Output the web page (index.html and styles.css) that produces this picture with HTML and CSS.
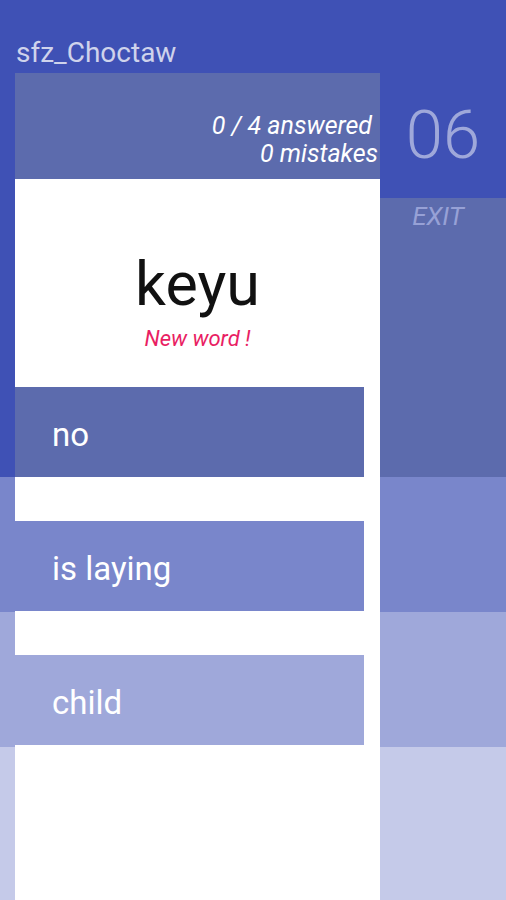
FILE: index.html
```html
<!DOCTYPE html>
<html lang="en">
<head>
<meta charset="utf-8">
<title>sfz_Choctaw</title>
<link rel="stylesheet" href="styles.css">
</head>
<body>
<div class="app">
  <div class="title">sfz_Choctaw</div>
  <div class="main">
    <div class="card">
      <div class="card-head">
        <div class="stat stat-answered">0 / 4 answered</div>
        <div class="stat">0 mistakes</div>
      </div>
      <div class="card-body">
        <div class="word">keyu</div>
        <div class="hint">New word !</div>
        <div class="answers">
          <div class="answer answer-1">no</div>
          <div class="answer answer-2">is laying</div>
          <div class="answer answer-3">child</div>
        </div>
      </div>
    </div>
    <div class="side">
      <div class="counter">06</div>
      <div class="exit">EXIT</div>
    </div>
  </div>
</div>
</body>
</html>
```
FILE: styles.css
```css
html, body {
  margin: 0;
  padding: 0;
}

body {
  font-family: Roboto, "Noto Sans", Arial, sans-serif;
  background: linear-gradient(to bottom,
    #3f51b5 0, #3f51b5 477px,
    #7986cb 477px, #7986cb 612px,
    #9fa8da 612px, #9fa8da 747px,
    #c5cae9 747px, #c5cae9 100%);
}

.app {
  width: 506px;
  height: 900px;
  overflow: hidden;
}

.title {
  box-sizing: border-box;
  height: 73px;
  padding: 38px 0 0 16px;
  font-size: 28px;
  line-height: 30px;
  color: rgba(255, 255, 255, 0.75);
}

.main {
  display: flex;
}

.card {
  margin-left: 15px;
  width: 365px;
  height: 827px;
  background: #ffffff;
  display: flex;
  flex-direction: column;
}

.card-head {
  box-sizing: border-box;
  height: 106px;
  padding: 39px 2px 0 0;
  background: #5c6bad;
  color: #ffffff;
  font-style: italic;
  font-size: 25px;
  line-height: 28px;
  text-align: right;
}

.stat-answered {
  padding-right: 6px;
}

.card-body {
  padding-top: 71px;
  display: flex;
  flex-direction: column;
}

.word {
  text-align: center;
  font-size: 61px;
  line-height: 68px;
  color: #111111;
}

.hint {
  margin-top: 9px;
  text-align: center;
  font-style: italic;
  font-size: 22px;
  line-height: 24px;
  color: #e91e63;
}

.answers {
  margin-top: 36px;
  display: flex;
  flex-direction: column;
  gap: 44px;
}

.answer {
  box-sizing: border-box;
  width: 349px;
  height: 90px;
  padding: 5px 0 0 37px;
  display: flex;
  align-items: center;
  font-size: 33px;
  color: #ffffff;
}

.answer-1 { background: #5c6bad; }
.answer-2 { background: #7986cb; }
.answer-3 { background: #9fa8da; }

.side {
  width: 126px;
  display: flex;
  flex-direction: column;
}

.counter {
  box-sizing: border-box;
  height: 125px;
  padding-top: 29px;
  text-align: center;
  font-size: 67px;
  font-weight: 300;
  line-height: 66px;
  color: #9fa8da;
}

.exit {
  box-sizing: border-box;
  height: 279px;
  padding: 4px 10px 0 0;
  background: #5c6bad;
  text-align: center;
  font-style: italic;
  font-size: 26px;
  line-height: 28px;
  color: #97a1d6;
}
```
